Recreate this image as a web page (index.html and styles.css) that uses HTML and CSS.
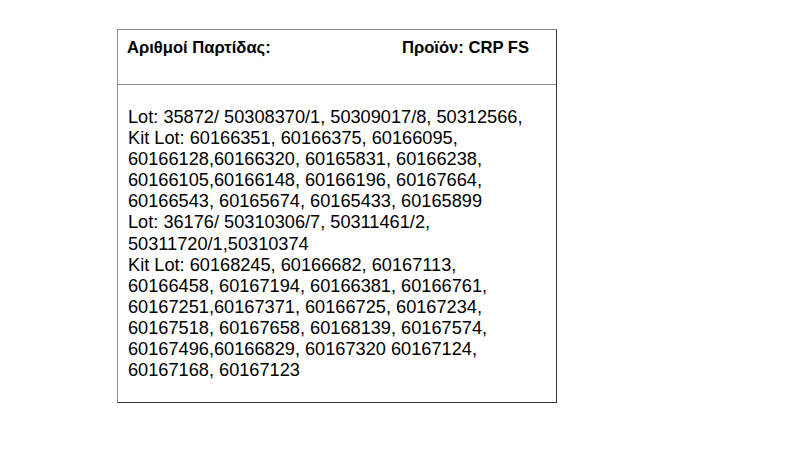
FILE: index.html
```html
<!DOCTYPE html>
<html lang="el">
<head>
<meta charset="utf-8">
<link rel="stylesheet" href="styles.css">
</head>
<body>
<div class="card">
  <div class="head">
    <span class="label">Αριθμοί Παρτίδας:</span>
    <span class="label">Προϊόν: CRP FS</span>
  </div>
  <div class="body">
    <p class="lots">Lot: 35872/ 50308370/1, 50309017/8, 50312566,<br>Kit Lot: 60166351, 60166375, 60166095,<br>60166128,60166320, 60165831, 60166238,<br>60166105,60166148, 60166196, 60167664,<br>60166543, 60165674, 60165433, 60165899<br>Lot: 36176/ 50310306/7, 50311461/2,<br>50311720/1,50310374<br>Kit Lot: 60168245, 60166682, 60167113,<br>60166458, 60167194, 60166381, 60166761,<br>60167251,60167371, 60166725, 60167234,<br>60167518, 60167658, 60168139, 60167574,<br>60167496,60166829, 60167320 60167124,<br>60167168, 60167123</p>
  </div>
</div>
</body>
</html>
```
FILE: styles.css
```css
html, body {
  margin: 0;
  padding: 0;
  background: #ffffff;
}
body {
  font-family: "Liberation Sans", Arial, sans-serif;
  color: #000;
  padding: 29px 0 0 117px;
}
.card {
  width: 438px;
  border-top: 1px solid #8a8a8a;
  border-left: 1px solid #8a8a8a;
  border-right: 1px solid #333;
  border-bottom: 1px solid #333;
}
.head {
  height: 55px;
  display: flex;
  justify-content: space-between;
  padding: 8px 27px 0 9px;
  box-sizing: border-box;
  border-bottom: 1px solid #8a8a8a;
}
.label {
  font-weight: bold;
  font-size: 16.6px;
  line-height: 20px;
}
.body {
  padding: 22px 10px 21px 10px;
}
.lots {
  margin: 0;
  font-size: 18.2px;
  line-height: 21.1px;
}
```
